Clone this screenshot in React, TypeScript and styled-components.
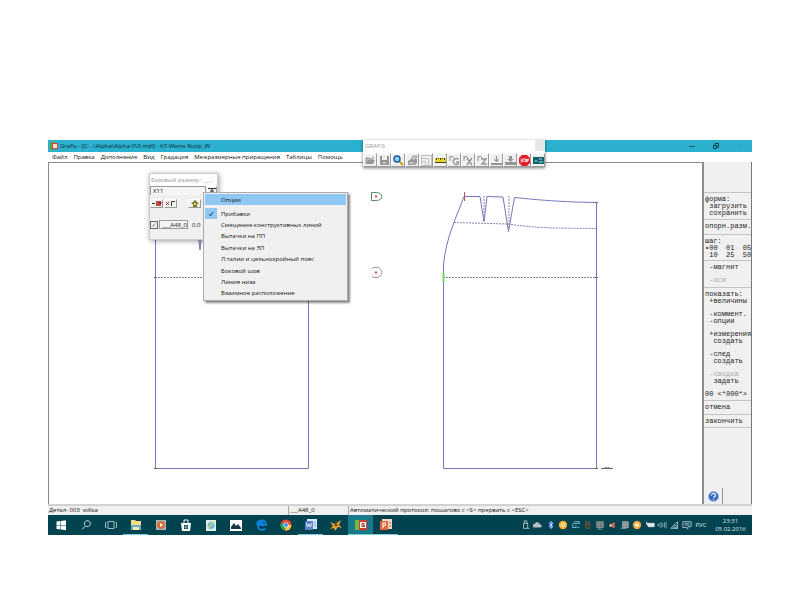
import React from "react";
import styled, { createGlobalStyle, css } from "styled-components";

const Global = createGlobalStyle`
  * { box-sizing: border-box; }
  body { margin: 0; background: #fff; font: 6px/8px "Open Sans", "Noto Sans", sans-serif; color: #111; }
  button, input { font: inherit; color: inherit; margin: 0; padding: 0; border: 0; background: none; border-radius: 0; }
  svg { display: block; }
`;

const Page = styled.main`padding: 140px 48px 65px;`;
const Window = styled.section`position: relative; display: flex; flex-direction: column;`;
const TitleBar = styled.header`
  display: flex; align-items: center; height: 12px; padding: 0 2px; gap: 2px;
  background: #2bb0cf; color: #0c2a34;
`;
const TitleText = styled.h1`flex: 1; margin: 0; font-size: 6px; font-weight: 400; white-space: pre;`;
const WindowButtons = styled.div`display: flex; gap: 12px; margin-right: 4px;`;
const WindowButton = styled.button`width: 12px; height: 12px; display: grid; place-items: center;`;
const MenuBar = styled.nav`display: flex; gap: 6px; height: 10px; padding-left: 4px; align-items: center;`;
const MenuButton = styled.button`white-space: nowrap;`;

const Work = styled.div`display: flex; align-items: stretch;`;
const Canvas = styled.div`flex: 1; min-width: 0; border: 1px solid #8b8b8b; border-width: 1px 2px 0 1px;`;
const Drawing = styled.svg`width: 100%; height: auto;`;

const Side = styled.aside`
  width: 48px; display: flex; flex-direction: column; background: #f0f0f0;
  border-right: 1px solid #777; padding-top: 30px;
  font: 7px/7px "Liberation Mono", monospace;
`;
const Group = styled.div<{ $h: number; $gap?: number }>`
  display: flex; flex-direction: column; gap: ${p => p.$gap ?? 0}px;
  height: ${p => p.$h}px; padding: 3px 0 0 1px;
  border-top: 1px solid #c4c4c4;
`;
const Pair = styled.div`display: flex; flex-direction: column;`;
const Command = styled.button<{ $off?: boolean }>`
  height: 7px; text-align: left; white-space: pre; color: ${p => (p.$off ? "#aaa" : "#222")};
`;
const HelpButton = styled.button`
  width: 19px; height: 16px; margin-top: auto; display: grid; place-items: center;
  border-right: 1px solid #999;
`;

const Status = styled.footer`
  display: flex; height: 11px; border-top: 2px solid #d2d2d2; background: #f0f0f0;
`;
const Cell = styled.div<{ $w?: number; $line?: boolean }>`
  ${p => (p.$w ? css`width: ${p.$w}px;` : css`flex: 1;`)}
  padding-left: 1px; white-space: pre; border-left: ${p => (p.$line ? "1px solid #aaa" : "0")};
`;

const TaskBar = styled.div`display: flex; height: 20px; background: #03424f; color: #dbe8ea;`;
const TaskButton = styled.button<{ $open?: boolean; $active?: boolean }>`
  width: 25px; height: 20px; display: grid; place-items: center;
  background: ${p => (p.$active ? "#18798a" : "none")};
  box-shadow: ${p => (p.$open ? "inset 0 -1px #7bd0de" : "none")};
`;
const Tray = styled.div`display: flex; align-items: center; margin-left: auto;`;
const TrayIcons = styled.div`display: flex; justify-content: space-between; width: 173px;`;
const TrayButton = styled.button`width: 12px; height: 12px; display: grid; place-items: center;`;
const Lang = styled.button`width: 16px;`;
const Clock = styled.time`width: 43px; text-align: center; line-height: 8px;`;

const Floating = styled.div<{ $x: number; $y: number; $w: number }>`
  position: absolute; left: ${p => p.$x}px; top: ${p => p.$y}px; width: ${p => p.$w}px;
  background: #f0f0f0;
`;
const ToolPalette = styled(Floating)`box-shadow: 0 1px 3px #0008;`;
const PaletteTitle = styled.div`
  display: flex; justify-content: space-between; height: 13px; background: #fff; color: #999;
  padding-left: 2px; line-height: 13px;
`;
const PaletteClose = styled.button`width: 10px; height: 11px; background: #e7e7e7; color: #ddd;`;
const Tools = styled.div`display: grid; grid-template-columns: repeat(13, 14px);`;
const Tool = styled.button`
  height: 14px; display: grid; place-items: center; background: #f0f0f0;
  border: 1px solid; border-color: #fff #999 #999 #fff;
`;

const SizePanel = styled(Floating)`height: 67px; border: 1px solid #ccc; box-shadow: 1px 1px 5px #0006;`;
const PanelTitle = styled.div`height: 12px; line-height: 12px; padding-left: 1px; background: #fff; color: #999; white-space: nowrap;`;
const PanelRow = styled.div<{ $mt?: number }>`display: flex; align-items: center; gap: 1px; height: 9px; margin-top: ${p => p.$mt ?? 0}px;`;
const Field = styled.input<{ $w: number }>`
  width: ${p => p.$w}px; height: 9px; line-height: 7px; border: 1px solid #999; text-align: right; background: #f5f5f5;
`;
const NameField = styled(Field)`text-align: left; padding-left: 2px; border-width: 1px 1px 0 1px;`;
const Small = styled.button<{ $ml?: number }>`
  width: 13px; height: 9px; margin-left: ${p => p.$ml ?? 0}px; display: grid; place-items: center;
  background: #f0f0f0; border: 1px solid; border-color: #fff #999 #999 #fff;
`;
const Tick = styled.input`
  appearance: none; width: 8px; height: 8px; border: 1px solid #666; display: grid; place-items: center;
  &:checked::after { content: "✓"; font: 6px/6px "DejaVu Sans", sans-serif; color: #555; }
`;
const Value = styled.span`padding-left: 3px;`;

const Popup = styled(Floating)`
  height: 109px; border: 1px solid #aaa; box-shadow: 2px 2px 2px #0007; display: flex; flex-direction: column; padding: 1px;
`;
const PopupItem = styled.button<{ $hot?: boolean }>`
  flex: 1; display: flex; align-items: center; text-align: left; white-space: nowrap;
  background: ${p => (p.$hot ? "#90c8f4" : "none")};
  ${p => p.$hot && css`flex: 0 0 11px; margin-bottom: 3px;`}
`;
const Mark = styled.span<{ $on?: boolean }>`
  width: 12px; height: 11px; margin-right: 4px; display: grid; place-items: center;
  background: ${p => (p.$on ? "#90c8f4" : "none")};
`;

const g = "#969696";
const toolIcons: [string, React.ReactNode][] = [
  ["Открыть", <><path d="M1 9V3h3l1 1h3v1" fill="#bbb" stroke={g} /><path d="M1 9l2-4h7L8 9z" fill={g} /><path d="M7 2l2 1" stroke={g} /></>],
  ["Сохранить", <><path d="M1 1h9v9H2L1 9z" fill={g} /><path d="M3 1h5v4H3z" fill="#eee" /><path d="M4 7h3v2H4z" fill="#c4c4c4" /></>],
  ["Поиск", <><path d="M6 6l4 4" stroke="#d09a20" strokeWidth="2" /><circle cx="4" cy="4" r="3" fill="#8bd8f7" stroke="#1856a0" strokeWidth="1.4" /></>],
  ["Печать", <><path d="M1 6l3-2h6v4l-2 2H1z" fill={g} /><path d="M4 5l2-4h4L8 5z" fill="#ccc" stroke={g} /><path d="M2 8h5" stroke="#eee" /></>],
  ["Формат", <path d="M.5.5h10v10H.5zM.5 3.500h7v7M.5 6.500h4v4" fill="none" stroke="#c2c2c2" />],
  ["Линейка", <><path d="M0 3h11v5H0z" fill="#e6d92e" /><path d="M0 7.5h11M1.5 3v2M3.5 3v1M5.5 3v2M7.5 3v1M9.5 3v2" stroke="#453f12" /></>],
  ["Вариант G", <><path d="M1 3l2-2 2 2M1 1v5" fill="none" stroke={g} /><path d="M9.500 4.500a3 3 0 1 0 0 4V7H7" fill="none" stroke={g} strokeWidth="1.400" /></>],
  ["Вариант X", <><path d="M1 3l2-2 2 2M1 1v5" fill="none" stroke={g} /><path d="M4 3l5 7M9 3l-5 7" stroke={g} strokeWidth="1.400" /></>],
  ["Вариант Z", <><path d="M1 3l2-2 2 2M1 1v5" fill="none" stroke={g} /><path d="M4 4h5L5 9h5" fill="none" stroke={g} strokeWidth="1.400" /></>],
  ["Вставить", <><path d="M5.500 1v5M3.500 4.500l2 2 2-2" fill="none" stroke={g} strokeWidth="1.200" /><path d="M0 8h11v2H0z" fill={g} /></>],
  ["Загрузить", <><path d="M4 1h3v3h2L5.500 7 2 4h2z" fill={g} /><path d="M0 7h11v3H0z" fill={g} /></>],
  ["Стоп", <><path d="M3 0h5l3 3v5l-3 3H3L0 8V3z" fill="#e21d25" /><path d="M1.500 4h2v1.500h-2M4 4h2M5 4v3M6.500 4h1v3h-1zM8.500 7V4h1v1.500h-1M1.500 7h2V5.500" fill="none" stroke="#fff" strokeWidth=".7" /></>],
  ["Экран", <><path d="M0 2h11v7H0z" fill="#12646c" /><path d="M1.500 6h3M6 4h3M6 7h4" stroke="#a2dce0" /></>],
];

const taskIcons: [string, React.ReactNode, boolean?, boolean?][] = [
  ["Пуск", <path d="M1.500 2.500l4-.5v4h-4zM6 2l5-.7V6H6zM1.500 6.500h4v4l-4-.5zM6 6.500h5v4.700L6 10.500z" fill="#fff" />],
  ["Поиск", <path d="M5 6.500a3 3 0 1 1 .5.5L2 10.500" fill="none" stroke="#c9dadd" />],
  ["Представление задач", <path d="M3 2.500h6v7H3zM1.500 3.500h-1v5h1M10.500 3.500h1v5h-1" fill="none" stroke="#9dbbc1" />],
  ["Проводник", <><path d="M1 1h4l1 1h5v9H1z" fill="#f6dc83" /><path d="M1 6h10v5H1z" fill="#60aecd" /><path d="M3 8h6v3H3z" fill="#f7e6a5" /></>, true],
  ["Проигрыватель", <><path d="M1 1h10v10H1z" fill="#9fb9c7" /><circle cx="6" cy="6" r="4" fill="#dc6a31" /><path d="M5 4l3 2-3 2z" fill="#fff" /></>],
  ["Магазин", <><path d="M1 4h10l-1 8H2z" fill="#fff" /><path d="M4 4V1h4v3" fill="none" stroke="#fff" /><path d="M4 6h1.700v1.700H4zM6.200 6H8v1.700H6.200zM4 8.200h1.700V10H4zM6.200 8.200H8V10H6.200z" fill="#03424f" /></>],
  ["Журнал", <><path d="M1 1h10v11H1z" fill="#e1eee8" /><circle cx="6" cy="6.500" r="3.500" fill="#66b9dd" /><path d="M3 9l6-6" stroke="#e2d261" strokeWidth="1.500" /></>],
  ["Фотографии", <><path d="M0 1h12v11H0z" fill="#fff" /><path d="M1 10V8l3-4 2 3 2-2 3 4v1z" fill="#173742" /></>],
  ["Edge", <path d="M10.500 9.500C5 13 2 9 3.500 6H11C11 0 3 0 1.500 5.500 4 2 8 2.500 8 5H4" fill="none" stroke="#0682dc" strokeWidth="1.800" />],
  ["Chrome", <><circle cx="6" cy="6" r="5.500" fill="#e54b36" /><path d="M6 6L1 4a5.500 5.500 0 0 0 4 7.500z" fill="#26a650" /><path d="M6 6h5.500A5.500 5.500 0 0 1 5 11.500z" fill="#fac83d" /><circle cx="6" cy="6" r="2.600" fill="#fff" /><circle cx="6" cy="6" r="2" fill="#438bea" /></>],
  ["Word", <><path d="M2 0h10v10H2z" fill="#dce9f7" /><path d="M0 2h8v9H0z" fill="#5585c6" /><path d="M1.500 4l1 4L4 5l1.500 3 1-4M9 3h2M9 5h2M9 7h2" fill="none" stroke="#eef" /><path d="M9 3h2M9 5h2M9 7h2" stroke="#7a9fd0" /></>, true],
  ["Птица", <><path d="M0 3l5 2 6-4-2 5 3 3-4-1-3 4-1-3-4 1 3-3z" fill="#eba028" /><circle cx="6" cy="6" r="1.500" fill="#664d29" /></>],
  ["Grafis", <><path d="M0 1h5v10H0z" fill="#74b93c" /><path d="M4 1h8v10H4z" fill="#cf3d31" /><path d="M5 3h6v6H5z" fill="#fff" /><path d="M9.500 4.500H7v3h2.500V6H8" fill="none" stroke="#a42520" /></>, true, true],
  ["PowerPoint", <><path d="M2 0h10v10H2z" fill="#f6d4c5" /><path d="M0 2h8v9H0z" fill="#e06b42" /><path d="M3 9V4h2.500v2.500H3" fill="none" stroke="#fff" /><path d="M9 4h2M9 7h2" stroke="#e06b42" /></>, true],
];

const w = "#b9cdd1";
const trayIcons: [string, React.ReactNode][] = [
  ["USB", <path d="M4 4V1h3v3M3 4h5v6H3zM8 10h2" fill="none" stroke={w} />],
  ["OneDrive", <path d="M1 9a2 2 0 0 1 1-4c1-3 5-3 6 0 3 0 3 4 1 4z" fill="#b7bec1" />],
  ["Bluetooth", <><ellipse cx="6" cy="6" rx="3" ry="4.500" fill="#235fbd" /><path d="M4 4l4 4-2 2V2l2 2-4 4" fill="none" stroke="#fff" strokeWidth=".8" /></>],
  ["Обновление", <><circle cx="6" cy="6" r="5" fill="#f5ae32" /><circle cx="6" cy="6" r="2.500" fill="none" stroke="#fff3d0" /><path d="M6 5v2" stroke="#fff" /></>],
  ["Сеть", <path d="M2 4h8M4 2h6v3M2 5v4h4V6M7 9h3" fill="none" stroke="#8dc7e1" />],
  ["Датчик", <path d="M3 2h5v8H3zM3 5h5" fill="#453f36" stroke="#665a4a" />],
  ["Монитор", <path d="M2 2h8v7H2zM2 5h8M5 2v9M3 11h6" fill="#6c7679" stroke="#8c9799" />],
  ["Звук", <><path d="M2 5h2l4-3v8L4 8H2z" fill="#e06a50" /><path d="M2 5h2v3H2z" fill="#d8d8d8" /></>],
  ["Диск", <path d="M3 2h7v7H3zM1 10h7M3 5h7M6 2v7" fill="#778487" stroke="#a7b1b3" />],
  ["Защита", <><circle cx="6" cy="6" r="5" fill="#f2a545" /><circle cx="6" cy="6" r="2.500" fill="#fff0c0" /></>],
  ["Питание", <path d="M2 4h9v4H4zM2 2v3" fill="#dfe8e8" stroke="#dfe8e8" />],
  ["Громкость", <path d="M1 5h2l2-2v6L3 7H1zM7 4v4M9 3v6M11 2v8" fill="none" stroke={w} strokeWidth=".8" />],
  ["Wi-Fi", <path d="M1 10l8-8v8zM3 8l6 2M5 6l4 2" fill="none" stroke={w} />],
  ["Уведомления", <path d="M1 2h10v6H7v3L5 9H1zM3 4h6M3 6h6" fill="none" stroke={w} />],
];

const menus = ["Файл", "Правка", "Дополнение", "Вид", "Градация", "Межразмерные приращения", "Таблицы", "Помощь"];
const options = ["Прибавки", "Смещение конструктивных линий", "Вытачки на ПП", "Вытачки на ЗП", "Л.талии и цельнокройный пояс", "Боковой шов", "Линия низа", "Взаимное расположение"];

const Pattern = () => (
  <Drawing viewBox="49 163 653 341" role="img" aria-label="Чертёж юбки">
    <g fill="none" stroke="#7676bd">
      <path d="M155.500 200V468.500H308.500V200M197 225l3 25 3-25" />
      <path d="M464 196.500C457 216 446 237 443.500 265V468.500H596.500V202.500C560 202 540 200 514.500 197.500L508.500 231.500 503 197 487 196.500 484 221.500 480 196.500z" />
    </g>
    <path d="M481 196.500h5M504 197h10" stroke="#fff" strokeWidth="2" />
    <g fill="none" stroke="#8484b0" strokeDasharray="2 1">
      <path d="M484 196v25M509 196v32M200 225v25" />
      <path d="M454 222.500L508 224C535 228 550 228 596 228.500" />
      <path d="M155 277.500H308M443 277.500H596" stroke="#85858f" />
    </g>
    <path d="M464.500 192v9" stroke="#a25b67" />
    <path d="M443.500 273v9" stroke="#74dc5b" strokeWidth="2" />
    <path d="M595 277.500h3M595 202.500h3M154 277.500h3M307 277.500h3M601 468.500h12M154 468.500h3M595 468.500h3" stroke="#666" />
    <path d="M604 467.500h6" stroke="#aaa" />
    <path d="M371.500 192.500h5c7 0 7 8 0 8h-5z" fill="none" stroke="#5c8c5c" />
    <path d="M371.500 269c3-3 10-2 10.500 3.500-.5 5.500-7.500 6.500-10.500 3.500" fill="none" stroke="#a98e86" />
    <path d="M375 196.500h2M375 272.500h2" stroke="#d34b50" strokeWidth="2" />
  </Drawing>
);

export default function App() {
  return (
    <Page>
      <Global />
      <Window>
        <TitleBar>
          <svg width="8" height="8"><path d="M0 0h4v8H0z" fill="#699f3d" /><path d="M2 1h6v6H2z" fill="#c6473b" /><path d="M3 2h4v4H3z" fill="#f5e9d0" /></svg>
          <TitleText>Grafis - [C: ..\Alpha\Alpha 0\3.mdl] - 67-Werte Rutip_W</TitleText>
          <WindowButtons>
            <WindowButton aria-label="Свернуть"><svg width="6" height="6"><path d="M0 3.500h6" stroke="#28505a" /></svg></WindowButton>
            <WindowButton aria-label="Восстановить"><svg width="6" height="6"><path d="M.5 2.500h3v3h-3zM2 2V.5h3.500V4H4" fill="none" stroke="#123b46" /></svg></WindowButton>
            <WindowButton aria-label="Закрыть"><svg width="6" height="6"><path d="M1 1l4 4M5 1L1 5" stroke="#4199ad" strokeWidth=".7" /></svg></WindowButton>
          </WindowButtons>
        </TitleBar>
        <MenuBar>{menus.map(m => <MenuButton key={m}>{m}</MenuButton>)}</MenuBar>
        <Work>
          <Canvas><Pattern /></Canvas>
          <Side>
            <Group $h={27}><Command>форма:</Command><Command>{" загрузить"}</Command><Command>{" сохранить"}</Command></Group>
            <Group $h={15}><Command>опорн.разм.</Command></Group>
            <Group $h={26}><Command>шаг:</Command><Command>•00  01  05</Command><Command>{" 10  25  50"}</Command></Group>
            <Group $h={27} $gap={6}><Command>{" -магнит"}</Command><Command $off>{" -оси"}</Command></Group>
            <Group $h={113} $gap={6}>
              <Pair><Command>показать:</Command><Command>{" +величины"}</Command></Pair>
              <Pair><Command>{" -коммент."}</Command><Command>{" -опции"}</Command></Pair>
              <Pair><Command>{" +измерения"}</Command><Command>{"  создать"}</Command></Pair>
              <Pair><Command>{" -след"}</Command><Command>{"  создать"}</Command></Pair>
              <Pair><Command $off>{" -сводка"}</Command><Command>{"  задать"}</Command></Pair>
              <Command>{"00 <*000*>"}</Command>
            </Group>
            <Group $h={14}><Command>отмена</Command></Group>
            <Group $h={13}><Command>закончить</Command></Group>
            <Group $h={4} />
            <HelpButton aria-label="Справка">
              <svg width="11" height="11"><circle cx="5.500" cy="5.500" r="5" fill="#3468c4" stroke="#a3bce6" /><path d="M3.500 4.500c0-3 4-2.500 4 0 0 1.500-2 1-2 2.500M5.500 8v1.200" fill="none" stroke="#fff" strokeWidth="1.200" /></svg>
            </HelpButton>
          </Side>
        </Work>
        <Status>
          <Cell $w={240}>Детал- 003  юбка</Cell>
          <Cell $w={60} $line>___A48_0</Cell>
          <Cell $line>{"Автоматический протокол: пошагово с <S> прервать с <ESC>"}</Cell>
        </Status>
        <TaskBar>
          {taskIcons.map(([name, icon, open, active]) => (
            <TaskButton key={name} aria-label={name} $open={open} $active={active}><svg width="12" height="12" viewBox="0 0 12 12">{icon}</svg></TaskButton>
          ))}
          <Tray>
            <TrayIcons>{trayIcons.map(([name, icon]) => <TrayButton key={name} aria-label={name}><svg width="10" height="10" viewBox="0 0 12 12">{icon}</svg></TrayButton>)}</TrayIcons>
            <Lang>РУС</Lang>
            <Clock>23:31<br />05.02.2016</Clock>
          </Tray>
        </TaskBar>

        <ToolPalette $x={315} $y={0} $w={182}>
          <PaletteTitle>GRAFIS<PaletteClose aria-label="Закрыть панель" /></PaletteTitle>
          <Tools>{toolIcons.map(([name, icon]) => <Tool key={name} aria-label={name}><svg width="11" height="11" viewBox="0 0 11 11">{icon}</svg></Tool>)}</Tools>
        </ToolPalette>

        <SizePanel $x={101} $y={33} $w={69}>
          <PanelTitle>Базовый размер : __...</PanelTitle>
          <PanelRow>
            <NameField $w={56} aria-label="Имя" defaultValue="X11" />
            <Small aria-label="Выбрать"><svg width="8" height="7"><path d="M0 1.500h8M4 1v6M2 4h4" stroke="#333" /></svg></Small>
          </PanelRow>
          <PanelRow $mt={4}>
            <Small aria-label="Добавить"><svg width="10" height="7"><path d="M0 3.500h3" stroke="#333" /><path d="M4 1h5v5H4z" fill="#c64545" /><path d="M7 3h3" stroke="#333" /></svg></Small>
            <Small aria-label="Удалить"><svg width="10" height="7"><path d="M0 2l3 3M3 2L0 5" stroke="#c52f2f" /><path d="M5.500 6V1.500H9" fill="none" stroke="#333" /></svg></Small>
            <Small $ml={10} aria-label="Вставить"><svg width="8" height="7"><path d="M4 0l4 4H6v3H2V4H0z" fill="#77772e" /><path d="M3 3h2v2H3z" fill="#e6e24a" /></svg></Small>
          </PanelRow>
          <PanelRow $mt={12}>
            <Tick type="checkbox" aria-label="Размер" defaultChecked />
            <Field $w={29} aria-label="Размер" defaultValue="___A48_0" />
            <Value>0.0</Value>
          </PanelRow>
        </SizePanel>

        <Popup $x={155} $y={52} $w={145} role="menu">
          <PopupItem $hot role="menuitem"><Mark />Опции</PopupItem>
          {options.map((o, i) => (
            <PopupItem key={o} role="menuitem">
              <Mark $on={i === 0}>{i === 0 && <svg width="6" height="6"><path d="M1 3l1.500 2L5 1" fill="none" stroke="#244b66" /></svg>}</Mark>
              {o}
            </PopupItem>
          ))}
        </Popup>
      </Window>
    </Page>
  );
}
